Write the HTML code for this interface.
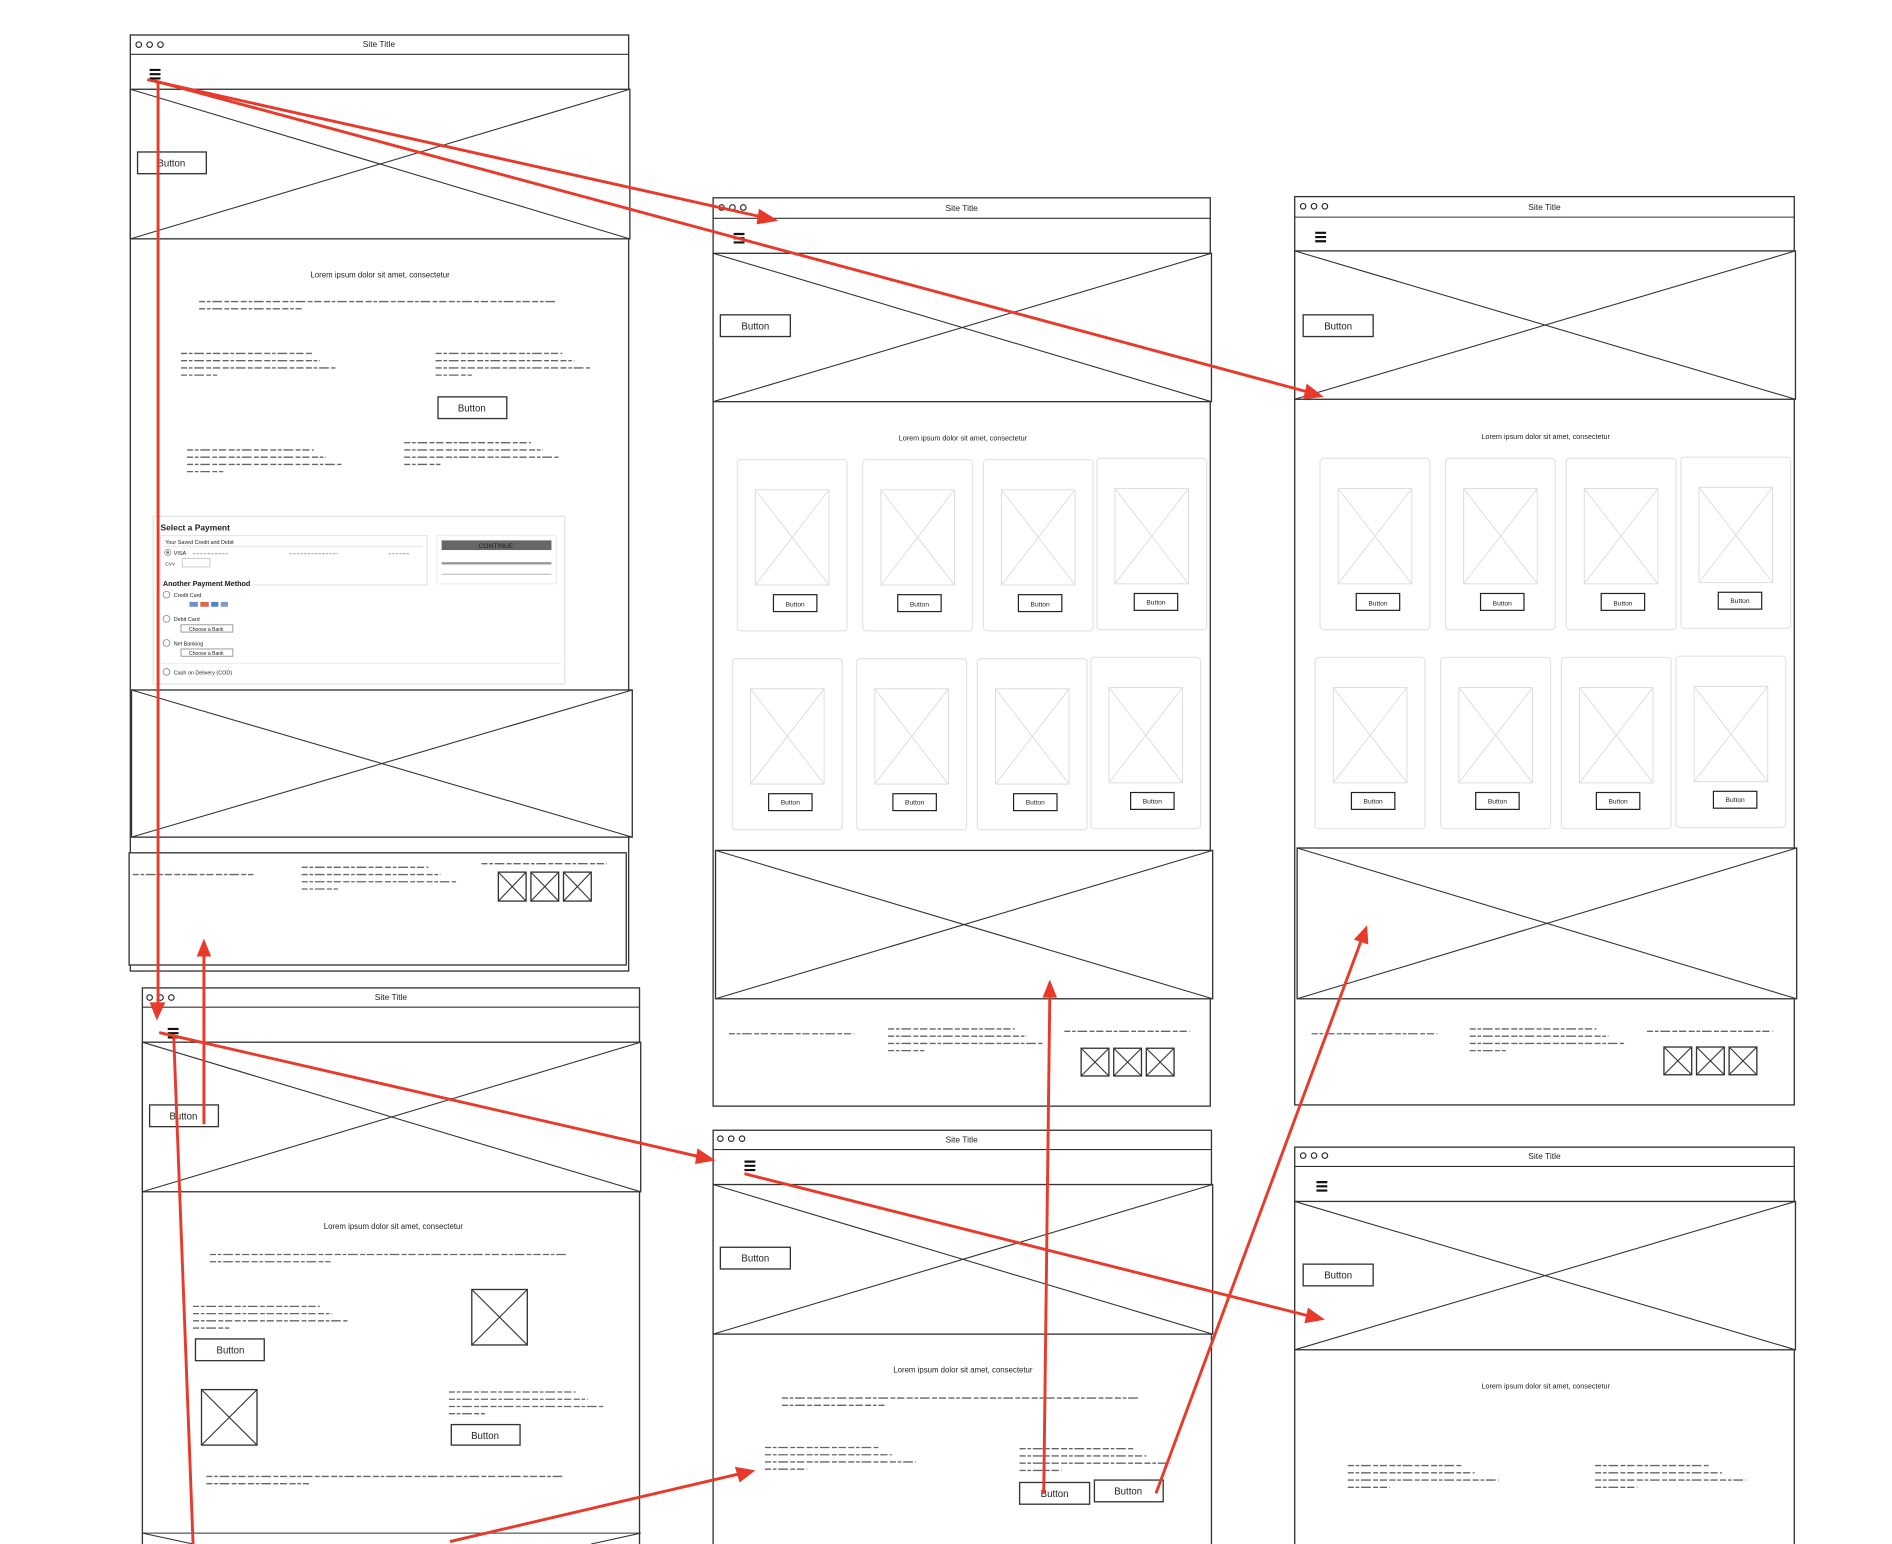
<!DOCTYPE html>
<html><head><meta charset="utf-8"><style>
html,body{margin:0;padding:0;background:#fff;width:1892px;height:1544px;overflow:hidden}
svg{display:block}
.f{fill:#fff;stroke:#333;stroke-width:1.1}
.x{stroke:#333;stroke-width:0.9;fill:none}
.t{stroke:#666;stroke-width:1.1;stroke-dasharray:5 1.5 3 1.5 8 2 4 1.5 6 2;fill:none}
.lbl{font-family:"Liberation Sans",sans-serif;fill:#222}
.r{stroke:#e8392a;stroke-width:2.4;fill:none}
.ra{fill:#e8392a}
.card{fill:#fff;stroke:#e4e4e4;stroke-width:1}
.ci{fill:none;stroke:#ddd;stroke-width:0.8}
.cb{fill:#fff;stroke:#222;stroke-width:1}
.ham{stroke:#111;stroke-width:1.8}
</style></head><body>
<svg width="1892" height="1544" viewBox="0 0 1568 1280" preserveAspectRatio="none" xmlns="http://www.w3.org/2000/svg">
<defs>
<g id="dots"><circle cx="0" cy="0" r="2.3" fill="#fff" stroke="#222" stroke-width="0.9"/><circle cx="9" cy="0" r="2.3" fill="#fff" stroke="#222" stroke-width="0.9"/><circle cx="18" cy="0" r="2.3" fill="#fff" stroke="#222" stroke-width="0.9"/></g>
<g id="ham"><path class="ham" d="M0 0h9M0 3.5h9M0 7h9"/></g>
<g id="card"><rect class="card" x="0" y="0" width="91" height="142" rx="3"/><rect class="ci" x="15" y="25" width="61" height="79"/><path class="ci" d="M15 25L76 104M76 25L15 104"/></g>
</defs>

<!-- ===== Frame A ===== -->
<rect class="f" x="108" y="29" width="413" height="776"/>
<line class="x" x1="108" y1="45" x2="521" y2="45"/>
<use href="#dots" x="115" y="37"/>
<text class="lbl" x="314" y="39" font-size="7" text-anchor="middle">Site Title</text>
<use href="#ham" x="124" y="58"/>
<rect class="f" x="108" y="74" width="414" height="124"/>
<path class="x" d="M108 74L522 198M522 74L108 198"/>
<rect class="f" x="114" y="126" width="57" height="18"/>
<text class="lbl" x="142" y="138" font-size="8" text-anchor="middle">Button</text>
<text class="lbl" x="315" y="230" font-size="6.5" text-anchor="middle">Lorem ipsum dolor sit amet, consectetur</text>
<path class="t" d="M165 250h296M165 256h85"/>
<path class="t" d="M150 293h110M150 299h115M150 305h128M150 311h30"/>
<path class="t" d="M361 293h105M361 299h115M361 305h128M361 311h30"/>
<rect class="f" x="363" y="329" width="57" height="18"/>
<text class="lbl" x="391" y="341" font-size="8" text-anchor="middle">Button</text>
<path class="t" d="M155 373h105M155 379h115M155 385h128M155 391h30"/>
<path class="t" d="M335 367h105M335 373h115M335 379h128M335 385h30"/>
<!-- payment -->
<rect x="127" y="428" width="341" height="139" fill="#fff" stroke="#e3e3e3"/>
<text class="lbl" x="133" y="440" font-size="7" font-weight="bold" fill="#555">Select a Payment</text>
<rect x="133" y="444" width="221" height="41" fill="#fff" stroke="#e6e6e6"/>
<text class="lbl" x="137" y="451" font-size="4.5" fill="#777">Your Saved Credit and Debit</text>
<line x1="136" y1="453" x2="350" y2="453" stroke="#eee" stroke-width="1.5"/>
<circle cx="139" cy="458" r="2.6" fill="#fff" stroke="#888" stroke-width="0.6"/><circle cx="139" cy="458" r="1.2" fill="#777"/>
<text class="lbl" x="144" y="460" font-size="4.5" fill="#777">VISA</text>
<path d="M160 459h30M240 459h40M322 459h18" stroke="#aaa" stroke-width="1" stroke-dasharray="2 1"/>
<text class="lbl" x="137" y="469" font-size="4" fill="#888">CVV</text>
<rect x="151" y="463" width="23" height="7" fill="#fff" stroke="#bbb" stroke-width="0.6"/>
<rect x="362" y="444" width="99" height="40" fill="#fff" stroke="#eee"/>
<rect x="366" y="448" width="91" height="8" fill="#666"/>
<text class="lbl" x="411" y="454.5" font-size="5.5" fill="#fff" text-anchor="middle">CONTINUE</text>
<line x1="366" y1="467" x2="457" y2="467" stroke="#999" stroke-width="2"/>
<line x1="366" y1="476" x2="457" y2="476" stroke="#aaa" stroke-width="0.7"/>
<text class="lbl" x="135" y="486" font-size="6" font-weight="bold" fill="#555">Another Payment Method</text>
<line x1="212" y1="485" x2="354" y2="485" stroke="#eee" stroke-width="1.5"/>
<g fill="#fff" stroke="#777" stroke-width="0.6">
<circle cx="138" cy="493" r="2.8"/><circle cx="138" cy="513" r="2.8"/><circle cx="138" cy="533" r="2.8"/><circle cx="138" cy="557" r="2.8"/></g>
<g class="lbl" font-size="4.5" fill="#666"><text x="144" y="495">Credit Card</text><text x="144" y="515">Debit Card</text><text x="144" y="535">Net Banking</text><text x="144" y="559">Cash on Delivery (COD)</text></g>
<rect x="157" y="499" width="7" height="4" fill="#6a8ed8"/><rect x="166" y="499" width="7" height="4" fill="#d8684a"/><rect x="175" y="499" width="6" height="4" fill="#4f84c8"/><rect x="183" y="499" width="6" height="4" fill="#7b9bc9"/>
<rect x="150" y="518" width="43" height="6" fill="#fff" stroke="#777" stroke-width="0.6"/><text class="lbl" x="171" y="523" font-size="4.2" fill="#666" text-anchor="middle">Choose a Bank</text>
<rect x="150" y="538" width="43" height="6" fill="#fff" stroke="#777" stroke-width="0.6"/><text class="lbl" x="171" y="543" font-size="4.2" fill="#666" text-anchor="middle">Choose a Bank</text>
<line x1="134" y1="550" x2="465" y2="550" stroke="#eee"/>
<rect class="f" x="109" y="572" width="415" height="122"/>
<path class="x" d="M109 572L524 694M524 572L109 694"/>
<rect class="f" x="107" y="707" width="412" height="93"/>
<path class="t" d="M110 725h100"/>
<path class="t" d="M250 719h105M250 725h115M250 731h128M250 737h30"/>
<path class="t" d="M399 716h104"/>
<g><rect class="f" x="413" y="723" width="23" height="24"/><path class="x" d="M413 723L436 747M436 723L413 747"/>
<rect class="f" x="440" y="723" width="23" height="24"/><path class="x" d="M440 723L463 747M463 723L440 747"/>
<rect class="f" x="467" y="723" width="23" height="24"/><path class="x" d="M467 723L490 747M490 723L467 747"/></g>

<!-- ===== Frame B ===== -->
<rect class="f" x="118" y="819" width="412" height="470"/>
<line class="x" x1="118" y1="835" x2="530" y2="835"/>
<use href="#dots" x="124" y="827"/>
<text class="lbl" x="324" y="829" font-size="7" text-anchor="middle">Site Title</text>
<use href="#ham" x="139" y="853"/>
<rect class="f" x="118" y="864" width="413" height="124"/>
<path class="x" d="M118 864L531 988M531 864L118 988"/>
<rect class="f" x="124" y="916" width="57" height="18"/>
<text class="lbl" x="152" y="928" font-size="8" text-anchor="middle">Button</text>
<text class="lbl" x="326" y="1019" font-size="6.5" text-anchor="middle">Lorem ipsum dolor sit amet, consectetur</text>
<path class="t" d="M174 1040h296M174 1046h100"/>
<path class="t" d="M160 1083h105M160 1089h115M160 1095h128M160 1101h30"/>
<rect class="f" x="162" y="1110" width="57" height="18"/>
<text class="lbl" x="191" y="1122" font-size="8" text-anchor="middle">Button</text>
<rect class="f" x="391" y="1069" width="46" height="46"/><path class="x" d="M391 1069L437 1115M437 1069L391 1115"/>
<rect class="f" x="167" y="1152" width="46" height="46"/><path class="x" d="M167 1152L213 1198M213 1152L167 1198"/>
<path class="t" d="M372 1154h105M372 1160h115M372 1166h128M372 1172h30"/>
<rect class="f" x="374" y="1181" width="57" height="17"/>
<text class="lbl" x="402" y="1193" font-size="8" text-anchor="middle">Button</text>
<path class="t" d="M171 1224h296M171 1230h85"/>
<line class="x" x1="118" y1="1271" x2="531" y2="1271"/>
<path class="x" d="M118 1271L160 1280M531 1271L490 1280"/>

<!-- ===== Frame C ===== -->
<rect class="f" x="591" y="164" width="412" height="753"/>
<line class="x" x1="591" y1="181" x2="1003" y2="181"/>
<use href="#dots" x="598" y="172"/>
<text class="lbl" x="797" y="175" font-size="7" text-anchor="middle">Site Title</text>
<use href="#ham" x="608" y="194"/>
<rect class="f" x="591" y="210" width="413" height="123"/>
<path class="x" d="M591 210L1004 333M1004 210L591 333"/>
<rect class="f" x="597" y="261" width="58" height="18"/>
<text class="lbl" x="626" y="273" font-size="8" text-anchor="middle">Button</text>
<text class="lbl" x="798" y="365" font-size="6" text-anchor="middle">Lorem ipsum dolor sit amet, consectetur</text>
<use href="#card" x="611" y="381"/><use href="#card" x="715" y="381"/><use href="#card" x="815" y="381"/><use href="#card" x="909" y="380"/>
<use href="#card" x="607" y="546"/><use href="#card" x="710" y="546"/><use href="#card" x="810" y="546"/><use href="#card" x="904" y="545"/>
<g font-size="5.5" class="lbl" text-anchor="middle">
<rect class="cb" x="641" y="493" width="36" height="14"/><text x="659" y="503">Button</text>
<rect class="cb" x="744" y="493" width="36" height="14"/><text x="762" y="503">Button</text>
<rect class="cb" x="844" y="493" width="36" height="14"/><text x="862" y="503">Button</text>
<rect class="cb" x="940" y="492" width="36" height="14"/><text x="958" y="501">Button</text>
<rect class="cb" x="637" y="658" width="36" height="14"/><text x="655" y="667">Button</text>
<rect class="cb" x="740" y="658" width="36" height="14"/><text x="758" y="667">Button</text>
<rect class="cb" x="840" y="658" width="36" height="14"/><text x="858" y="667">Button</text>
<rect class="cb" x="937" y="657" width="36" height="14"/><text x="955" y="666">Button</text>
</g>
<rect class="f" x="593" y="705" width="412" height="123"/>
<path class="x" d="M593 705L1005 828M1005 705L593 828"/>
<path class="t" d="M604 857h104"/>
<path class="t" d="M736 853h105M736 859h115M736 865h128M736 871h30"/>
<path class="t" d="M882 855h104"/>
<rect class="f" x="896" y="869" width="23" height="23"/><path class="x" d="M896 869L919 892M919 869L896 892"/>
<rect class="f" x="923" y="869" width="23" height="23"/><path class="x" d="M923 869L946 892M946 869L923 892"/>
<rect class="f" x="950" y="869" width="23" height="23"/><path class="x" d="M950 869L973 892M973 869L950 892"/>

<!-- ===== Frame D ===== -->
<rect class="f" x="1073" y="163" width="414" height="753"/>
<line class="x" x1="1073" y1="180" x2="1487" y2="180"/>
<use href="#dots" x="1080" y="171"/>
<text class="lbl" x="1280" y="174" font-size="7" text-anchor="middle">Site Title</text>
<use href="#ham" x="1090" y="193"/>
<rect class="f" x="1073" y="208" width="415" height="123"/>
<path class="x" d="M1073 208L1488 331M1488 208L1073 331"/>
<rect class="f" x="1080" y="261" width="58" height="18"/>
<text class="lbl" x="1109" y="273" font-size="8" text-anchor="middle">Button</text>
<text class="lbl" x="1281" y="364" font-size="6" text-anchor="middle">Lorem ipsum dolor sit amet, consectetur</text>
<use href="#card" x="1094" y="380"/><use href="#card" x="1198" y="380"/><use href="#card" x="1298" y="380"/><use href="#card" x="1393" y="379"/>
<use href="#card" x="1090" y="545"/><use href="#card" x="1194" y="545"/><use href="#card" x="1294" y="545"/><use href="#card" x="1389" y="544"/>
<g font-size="5.5" class="lbl" text-anchor="middle">
<rect class="cb" x="1124" y="492" width="36" height="14"/><text x="1142" y="502">Button</text>
<rect class="cb" x="1227" y="492" width="36" height="14"/><text x="1245" y="502">Button</text>
<rect class="cb" x="1327" y="492" width="36" height="14"/><text x="1345" y="502">Button</text>
<rect class="cb" x="1424" y="491" width="36" height="14"/><text x="1442" y="500">Button</text>
<rect class="cb" x="1120" y="657" width="36" height="14"/><text x="1138" y="666">Button</text>
<rect class="cb" x="1223" y="657" width="36" height="14"/><text x="1241" y="666">Button</text>
<rect class="cb" x="1323" y="657" width="36" height="14"/><text x="1341" y="666">Button</text>
<rect class="cb" x="1420" y="656" width="36" height="14"/><text x="1438" y="665">Button</text>
</g>
<rect class="f" x="1075" y="703" width="414" height="125"/>
<path class="x" d="M1075 703L1489 828M1489 703L1075 828"/>
<path class="t" d="M1087 857h104"/>
<path class="t" d="M1218 853h105M1218 859h115M1218 865h128M1218 871h30"/>
<path class="t" d="M1365 855h104"/>
<rect class="f" x="1379" y="868" width="23" height="23"/><path class="x" d="M1379 868L1402 891M1402 868L1379 891"/>
<rect class="f" x="1406" y="868" width="23" height="23"/><path class="x" d="M1406 868L1429 891M1429 868L1406 891"/>
<rect class="f" x="1433" y="868" width="23" height="23"/><path class="x" d="M1433 868L1456 891M1456 868L1433 891"/>

<!-- ===== Frame E ===== -->
<rect class="f" x="591" y="937" width="413" height="350"/>
<line class="x" x1="591" y1="953" x2="1004" y2="953"/>
<use href="#dots" x="597" y="944"/>
<text class="lbl" x="797" y="947" font-size="7" text-anchor="middle">Site Title</text>
<use href="#ham" x="617" y="963"/>
<rect class="f" x="591" y="982" width="414" height="124"/>
<path class="x" d="M591 982L1005 1106M1005 982L591 1106"/>
<rect class="f" x="597" y="1034" width="58" height="18"/>
<text class="lbl" x="626" y="1046" font-size="8" text-anchor="middle">Button</text>
<text class="lbl" x="798" y="1138" font-size="6.5" text-anchor="middle">Lorem ipsum dolor sit amet, consectetur</text>
<path class="t" d="M648 1159h296M648 1165h85"/>
<path class="t" d="M634 1200h95M634 1206h105M634 1212h125M634 1218h35"/>
<path class="t" d="M845 1201h95M845 1207h105M845 1213h125M845 1219h35"/>
<rect class="f" x="845" y="1229" width="58" height="18"/>
<text class="lbl" x="874" y="1241" font-size="8" text-anchor="middle">Button</text>
<rect class="f" x="907" y="1227" width="57" height="18"/>
<text class="lbl" x="935" y="1239" font-size="8" text-anchor="middle">Button</text>

<!-- ===== Frame F ===== -->
<rect class="f" x="1073" y="951" width="414" height="340"/>
<line class="x" x1="1073" y1="967" x2="1487" y2="967"/>
<use href="#dots" x="1080" y="958"/>
<text class="lbl" x="1280" y="961" font-size="7" text-anchor="middle">Site Title</text>
<use href="#ham" x="1091" y="980"/>
<rect class="f" x="1073" y="996" width="415" height="123"/>
<path class="x" d="M1073 996L1488 1119M1488 996L1073 1119"/>
<rect class="f" x="1080" y="1048" width="58" height="18"/>
<text class="lbl" x="1109" y="1060" font-size="8" text-anchor="middle">Button</text>
<text class="lbl" x="1281" y="1151" font-size="6" text-anchor="middle">Lorem ipsum dolor sit amet, consectetur</text>
<path class="t" d="M1117 1215h95M1117 1221h105M1117 1227h125M1117 1233h35"/>
<path class="t" d="M1322 1215h95M1322 1221h105M1322 1227h125M1322 1233h35"/>

<!-- ===== Red arrows ===== -->
<path class="r" d="M122 66L632 180"/><polygon class="ra" points="645,183 629,173 627,186"/>
<path class="r" d="M128 67L1084 325"/><polygon class="ra" points="1097,329 1083,318 1080,331"/>
<path class="r" d="M131 68L131 832"/><polygon class="ra" points="130,846 124,831 137,831"/>
<path class="r" d="M169 932L169 793"/><polygon class="ra" points="169,778 163,793 175,793"/>
<path class="r" d="M132 856L580 959"/><polygon class="ra" points="593,962 578,952 576,965"/>
<path class="r" d="M144 860L160 1280"/>
<path class="r" d="M373 1278L612 1222"/><polygon class="ra" points="626,1219 609,1216 613,1229"/>
<path class="r" d="M617 973L1085 1091"/><polygon class="ra" points="1098,1094 1084,1084 1081,1097"/>
<path class="r" d="M865 1238L870 827"/><polygon class="ra" points="870,812 864,827 876,827"/>
<path class="r" d="M958 1238L1128 780"/><polygon class="ra" points="1133,767 1122,779 1134,783"/>
</svg>
</body></html>
